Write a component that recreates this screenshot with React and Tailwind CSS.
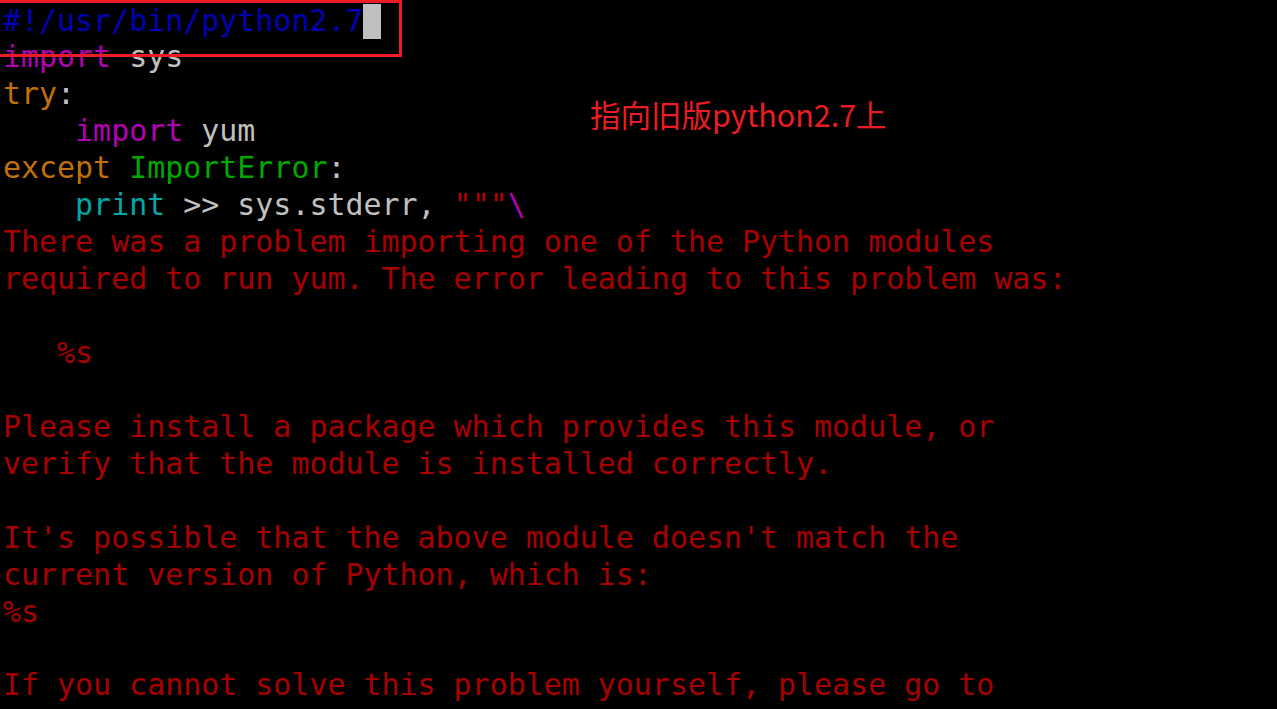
import React from "react";

const mono = { fontFamily: '"DejaVu Sans Mono", "Liberation Mono", monospace' };

const B = ({ c, children }) => <span className={c}>{children}</span>;

const lines = [
  [
    <B key="a" c="text-[#0000b4]">#!/usr/bin/python2.7</B>,
    <span key="cur" className="inline-block w-[18px] h-[35px] align-[-8px] bg-[#c0c0c0]" />,
  ],
  [<B key="a" c="text-[#b400b4]">import</B>, <B key="b" c="text-[#c0c0c0]"> sys</B>],
  [<B key="a" c="text-[#c0700a]">try</B>, <B key="b" c="text-[#c0c0c0]">:</B>],
  [<B key="a" c="text-[#b400b4]">    import</B>, <B key="b" c="text-[#c0c0c0]"> yum</B>],
  [
    <B key="a" c="text-[#c0700a]">except</B>,
    <B key="b" c="text-[#00a800]"> ImportError</B>,
    <B key="c" c="text-[#c0c0c0]">:</B>,
  ],
  [
    <B key="a" c="text-[#00a8a8]">    print</B>,
    <B key="b" c="text-[#c0c0c0]"> &gt;&gt; sys.stderr, </B>,
    <B key="c" c="text-[#b40000]">"""</B>,
    <B key="d" c="text-[#b400b4]">\</B>,
  ],
  "There was a problem importing one of the Python modules",
  "required to run yum. The error leading to this problem was:",
  "",
  "   %s",
  "",
  "Please install a package which provides this module, or",
  "verify that the module is installed correctly.",
  "",
  "It's possible that the above module doesn't match the",
  "current version of Python, which is:",
  "%s",
  "",
  "If you cannot solve this problem yourself, please go to",
];

export default function App() {
  return (
    <div className="relative w-[1277px] h-[709px] overflow-hidden bg-black">
      <pre className="pt-[1.5px] pl-[3px] text-[29.94px] leading-[37px] text-[#a80000]" style={mono}>
        {lines.map((l, i) => (
          <div key={i} className="h-[36.95px] whitespace-pre">
            {l === "" ? " " : l}
          </div>
        ))}
      </pre>

      {/* annotation box + note */}
      <div className="absolute left-[-3px] top-0 w-[405px] h-[57px] border-[3px] border-[#ec1c24]" />
      <div
        className="absolute left-[590px] top-[94px] text-[30.5px] leading-[40px] text-[#ec1c24]"
        style={{ fontFamily: '"Noto Sans CJK SC", "Noto Sans", sans-serif' }}
      >
        指向旧版python2.7上
      </div>
    </div>
  );
}
